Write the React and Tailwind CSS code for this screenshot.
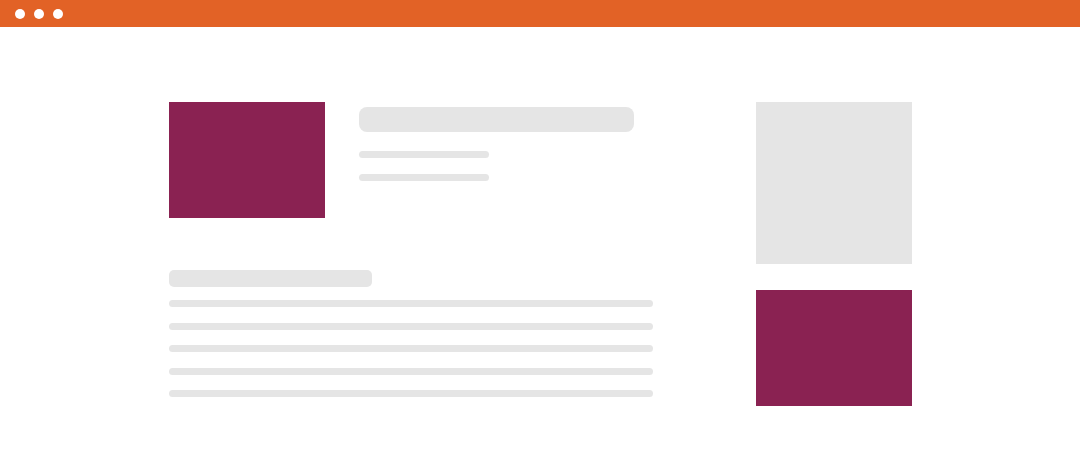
export default function App() {
  const lines = [0, 1, 2, 3, 4];

  return (
    <div className="w-[1080px] h-[465px] bg-white overflow-hidden">
      {/* barre du navigateur */}
      <div className="h-[27px] bg-[#e26226] flex items-center gap-[9px] pl-[15px]">
        <span className="w-[10px] h-[10px] rounded-full bg-white"></span>
        <span className="w-[10px] h-[10px] rounded-full bg-white"></span>
        <span className="w-[10px] h-[10px] rounded-full bg-white"></span>
      </div>

      <div className="flex pl-[169px] pt-[75px]">
        {/* colonne principale */}
        <div className="w-[484px]">
          <div className="flex">
            <div className="w-[156px] h-[116px] bg-[#8a2252]"></div>
            <div className="ml-[34px] pt-[5px]">
              <div className="w-[275px] h-[25px] rounded-[8px] bg-[#e5e5e5]"></div>
              <div className="mt-[19px] w-[130px] h-[7px] rounded-full bg-[#e5e5e5]"></div>
              <div className="mt-[16px] w-[130px] h-[7px] rounded-full bg-[#e5e5e5]"></div>
            </div>
          </div>

          <div className="mt-[52px] w-[203px] h-[17px] rounded-[5px] bg-[#e5e5e5]"></div>
          <div className="mt-[13px] flex flex-col gap-[15.6px]">
            {lines.map((i) => (
              <div key={i} className="w-[484px] h-[7px] rounded-full bg-[#e5e5e5]"></div>
            ))}
          </div>
        </div>

        {/* colonne latérale */}
        <div className="ml-[103px]">
          <div className="w-[156px] h-[162px] bg-[#e5e5e5]"></div>
          <div className="mt-[26px] w-[156px] h-[116px] bg-[#8a2252]"></div>
        </div>
      </div>
    </div>
  );
}
